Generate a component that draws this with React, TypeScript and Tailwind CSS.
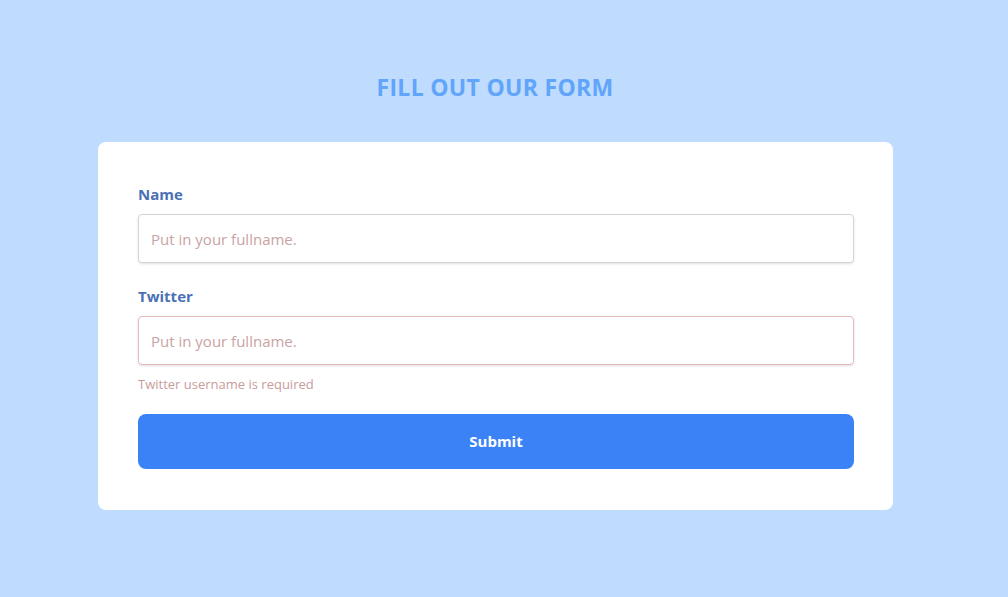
export default function App() {
  return (
    <div
      className="min-h-[597px] w-full bg-[#bfdbfe]"
      style={{ fontFamily: '"Open Sans", "Noto Sans", sans-serif' }}
    >
      <div className="w-[990px] flex flex-col items-center pt-[71px]">
        <h1 className="text-[23px] leading-[32px] font-bold text-[#60a5fa] tracking-[0.3px]">
          FILL OUT OUR FORM
        </h1>

        <form className="mt-[39px] ml-[1px] w-[795px] bg-white rounded-lg pl-10 pr-[39px] pt-[42px] pb-[41px]">
          <label className="block text-[15px] leading-[20px] font-bold text-[#4a70b6]">
            Name
          </label>
          <input
            className="mt-[10px] w-full h-[49px] px-3 text-[15px] border border-[#d4d4d4] rounded shadow-sm outline-none placeholder:text-[#c9a3a3]"
            placeholder="Put in your fullname."
          />

          <label className="block mt-[23px] text-[15px] leading-[20px] font-bold text-[#4a70b6]">
            Twitter
          </label>
          <input
            className="mt-[10px] w-full h-[49px] px-3 text-[15px] border border-[#e2b8b8] rounded shadow-sm outline-none placeholder:text-[#c9a3a3]"
            placeholder="Put in your fullname."
          />
          <p className="mt-[10px] text-[13px] leading-[18px] text-[#c79c9c]">
            Twitter username is required
          </p>

          <button
            type="button"
            className="mt-[21px] w-full h-[55px] bg-[#3b82f6] text-white text-[15px] font-bold rounded-lg"
          >
            Submit
          </button>
        </form>
      </div>
    </div>
  );
}
